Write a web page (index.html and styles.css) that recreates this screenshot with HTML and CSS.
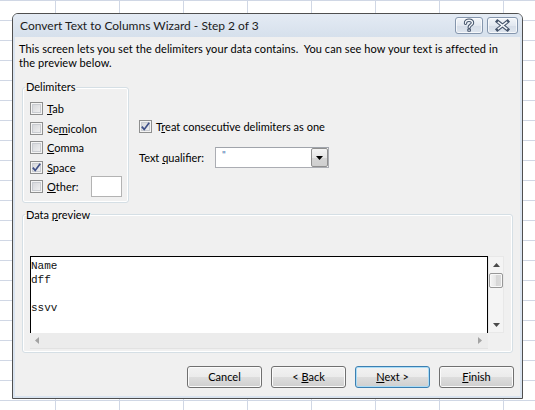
FILE: index.html
```html
<!DOCTYPE html>
<html>
<head>
<meta charset="utf-8">
<link rel="stylesheet" href="styles.css">
</head>
<body>
<div class="dialog">
  <div class="titlebar">
    <span class="title">Convert Text to Columns Wizard - Step 2 of 3</span>
    <div class="capbtns">
      <div class="cap help">
        <svg width="26" height="15" viewBox="0 0 26 15">
          <path d="M9.5 5.2 C9.5 3 11 2.2 13 2.2 C15 2.2 16.5 3 16.5 5 C16.5 6.8 13.2 7.2 13.2 9.3" fill="none" stroke="#44536a" stroke-width="3.4" stroke-linecap="round"/>
          <rect x="11.3" y="10.6" width="3.6" height="3.2" rx="0.8" fill="#44536a"/>
          <path d="M9.5 5.2 C9.5 3 11 2.2 13 2.2 C15 2.2 16.5 3 16.5 5 C16.5 6.8 13.2 7.2 13.2 9.3" fill="none" stroke="#f3f6fa" stroke-width="1.4" stroke-linecap="round"/>
          <rect x="12.4" y="11.6" width="1.4" height="1.2" fill="#f3f6fa"/>
        </svg>
      </div>
      <div class="cap close">
        <svg width="29" height="15" viewBox="0 0 29 15">
          <path d="M9.5 3.5 L19.5 11.5 M19.5 3.5 L9.5 11.5" fill="none" stroke="#44536a" stroke-width="3.6" stroke-linecap="square"/>
          <path d="M9.8 3.8 L19.2 11.2 M19.2 3.8 L9.8 11.2" fill="none" stroke="#f3f6fa" stroke-width="1.5"/>
        </svg>
      </div>
    </div>
  </div>
  <div class="client">
    <p class="intro">This screen lets you set the delimiters your data contains.&nbsp; You can see how your text is affected in<br>the preview below.</p>
    <div class="top-row">
      <fieldset class="group delims">
        <legend>Delimiters</legend>
        <div class="cb-list">
          <div class="cb-row"><span class="cb"></span><span><u>T</u>ab</span></div>
          <div class="cb-row"><span class="cb"></span><span>Se<u>m</u>icolon</span></div>
          <div class="cb-row"><span class="cb"></span><span><u>C</u>omma</span></div>
          <div class="cb-row"><span class="cb"><svg class="tick" width="11" height="11" viewBox="0 0 11 11"><path d="M1.8 5.6 L4.2 8.4 L9.2 1.8" fill="none" stroke="#3e4f87" stroke-width="1.7"/></svg></span><span><u>S</u>pace</span></div>
          <div class="cb-row"><span class="cb"></span><span><u>O</u>ther:</span><span class="other-input"></span></div>
        </div>
      </fieldset>
      <div class="options">
        <div class="cb-row treat"><span class="cb"><svg class="tick" width="11" height="11" viewBox="0 0 11 11"><path d="M1.8 5.6 L4.2 8.4 L9.2 1.8" fill="none" stroke="#3e4f87" stroke-width="1.7"/></svg></span><span>T<u>r</u>eat consecutive delimiters as one</span></div>
        <div class="qual">
          <span class="qual-label">Text <u>q</u>ualifier:</span>
          <div class="combo">
            <span class="combo-val">"</span>
            <span class="combo-btn"><svg width="7" height="4" viewBox="0 0 7 4"><path d="M0 0 H7 L3.5 4 Z" fill="#000"/></svg></span>
          </div>
        </div>
      </div>
    </div>
    <fieldset class="group preview-group">
      <legend>Data <u>p</u>review</legend>
      <div class="preview">
        <div class="pv-text">Name<br>dff<br><br>ssvv</div>
        <div class="vscroll">
          <svg class="arrow" width="7" height="4" viewBox="0 0 7 4"><path d="M3.5 0 L7 4 H0 Z" fill="#4a4a4a"/></svg>
          <div class="thumb"></div>
          <div class="vspace"></div>
          <svg class="arrow" width="7" height="4" viewBox="0 0 7 4"><path d="M0 0 H7 L3.5 4 Z" fill="#4a4a4a"/></svg>
        </div>
        <div class="hscroll">
          <svg width="4" height="7" viewBox="0 0 4 7"><path d="M4 0 V7 L0 3.5 Z" fill="#a3a3a3"/></svg>
          <svg width="4" height="7" viewBox="0 0 4 7"><path d="M0 0 V7 L4 3.5 Z" fill="#a3a3a3"/></svg>
        </div>
        <div class="corner"></div>
      </div>
    </fieldset>
    <div class="buttons">
      <div class="btn"><span>Cancel</span></div>
      <div class="btn"><span>&lt; <u>B</u>ack</span></div>
      <div class="btn default"><span><u>N</u>ext &gt;</span></div>
      <div class="btn"><span><u>F</u>inish</span></div>
    </div>
  </div>
</div>
</body>
</html>
```
FILE: styles.css
```css
html, body {
  margin: 0;
  padding: 0;
  height: 100%;
}
body {
  background-color: #ffffff;
  background-image:
    linear-gradient(to bottom, #d0d7e5 1px, transparent 1px),
    linear-gradient(to right, #d0d7e5 1px, transparent 1px);
  background-size: 100% 20px, 64px 100%;
  background-position: 0 0, 55px 0;
  font-family: "Lato", "Liberation Sans", sans-serif;
  font-size: 11px;
  color: #000;
  overflow: hidden;
}
.dialog {
  position: absolute;
  left: 12px;
  top: 13px;
  width: 511px;
  height: 386px;
  box-sizing: border-box;
  border: 1px solid #4f4f4f;
  border-radius: 6px 6px 0 0;
  background: #dae4f0;
  display: flex;
  flex-direction: column;
}
.titlebar {
  height: 23px;
  flex: none;
  display: flex;
  align-items: flex-start;
  justify-content: space-between;
  background: linear-gradient(#e4ebf4, #d6e0ec);
  border-radius: 5px 5px 0 0;
}
.title {
  padding-left: 7px;
  line-height: 23px;
  font-size: 12px;
  color: #1b1b1b;
}
.capbtns {
  display: flex;
  gap: 4px;
  margin-top: 3px;
  margin-right: 4px;
}
.cap {
  height: 17px;
  box-sizing: border-box;
  border: 1px solid #8596ad;
  border-radius: 3px;
  background: linear-gradient(#f3f6fa, #e2e8f0 50%, #d5dde8 51%, #dfe6ef);
  box-shadow: inset 0 0 0 1px rgba(255,255,255,0.7);
  display: flex;
  align-items: center;
  justify-content: center;
}
.cap.help { width: 28px; }
.cap.close { width: 31px; }
.cap svg { display: block; }
.client {
  flex: 1;
  margin: 0 2px 2px 2px;
  background: #f0f0f0;
  padding-top: 5px;
  box-sizing: border-box;
}
.intro {
  margin: 0;
  padding-left: 4px;
  line-height: 14px;
  white-space: nowrap;
  letter-spacing: 0.08px;
}
.top-row {
  display: flex;
  align-items: flex-start;
  margin-top: 10px;
  padding-left: 7px;
}
fieldset.group {
  margin: 0;
  padding: 0;
  border: 1px solid #d5dfe5;
  border-radius: 3px;
  box-shadow: inset 0 0 0 1px #ffffff;
  min-width: 0;
}
fieldset.group legend {
  padding: 0 1px;
  margin-left: 2px;
  line-height: 14px;
}
.delims {
  width: 107px;
  box-sizing: border-box;
}
.cb-list {
  padding: 5px 6px 5px 7px;
}
.cb-row {
  display: flex;
  align-items: center;
  height: 19.5px;
  gap: 4px;
}
.cb {
  flex: none;
  width: 13px;
  height: 13px;
  box-sizing: border-box;
  border: 1px solid #8e8f8f;
  background: linear-gradient(135deg, #d0d2d6, #f5f5f5);
  box-shadow: inset 0 0 0 1px #f4f4f4, inset 0 0 0 2px #c9ccd1;
  display: flex;
  align-items: center;
  justify-content: center;
}
.tick { display: block; }
.other-input {
  margin-left: auto;
  width: 31px;
  height: 21px;
  box-sizing: border-box;
  border: 1px solid #b3b3b3;
  background: #fff;
}
.options {
  margin-left: 10px;
  padding-top: 40px;
}
.cb-row.treat {
  height: 13px;
}
.qual {
  display: flex;
  align-items: center;
  margin-top: 14px;
}
.qual-label {
  width: 76px;
}
.combo {
  width: 114px;
  height: 21px;
  box-sizing: border-box;
  border: 1px solid #abadb3;
  border-top-color: #a0a4ab;
  background: #fff;
  display: flex;
  align-items: stretch;
}
.combo-val {
  flex: 1;
  padding-left: 6px;
  line-height: 13px;
  color: #2f68a8;
  font-size: 10px;
}
.combo-btn {
  width: 17px;
  box-sizing: border-box;
  border: 1px solid #8f8f8f;
  border-radius: 2px;
  background: linear-gradient(#f4f4f4, #e6e6e6 50%, #d5d5d5 51%, #cfcfcf);
  display: flex;
  align-items: center;
  justify-content: center;
}
.combo-btn svg { display: block; }
.preview-group {
  margin: 5px 0 0 7px !important;
  width: 491px;
  box-sizing: border-box;
}
.preview {
  margin: 34px 0 3px 7px;
  display: grid;
  grid-template-columns: 458px 16px;
  grid-template-rows: 77px 16px;
}
.pv-text {
  background: #fff;
  border: 1px solid #000;
  border-bottom: none;
  padding-top: 2px;
  font-family: "Liberation Mono", monospace;
  font-size: 11px;
  line-height: 14px;
  color: #111;
  overflow: hidden;
}
.vscroll {
  background: #f4f4f4;
  border: 1px solid #e8e8e8;
  box-sizing: border-box;
  display: flex;
  flex-direction: column;
  align-items: center;
  padding: 6px 0 5px;
}
.vscroll .arrow { display: block; flex: none; }
.thumb {
  margin-top: 6px;
  width: 14px;
  height: 15px;
  box-sizing: border-box;
  border: 1px solid #979797;
  border-radius: 2px;
  background: linear-gradient(to right, #f5f5f5, #e5e5e5 50%, #d6d6d6 51%, #dcdcdc);
  box-shadow: inset 0 0 0 1px #f8f8f8;
  flex: none;
}
.vspace { flex: 1; }
.hscroll {
  background: #ececec;
  border-bottom: 1px solid #e2e2e2;
  box-sizing: border-box;
  display: flex;
  align-items: center;
  justify-content: space-between;
  padding: 0 6px 0 5px;
}
.hscroll svg { display: block; }
.corner { background: #f0f0f0; }
.buttons {
  display: flex;
  justify-content: flex-end;
  gap: 9px;
  margin-top: 13px;
  padding-right: 6px;
}
.btn {
  width: 75px;
  height: 22px;
  box-sizing: border-box;
  border: 1px solid #707070;
  border-radius: 3px;
  background: linear-gradient(#f2f2f2, #ebebeb 50%, #dddddd 51%, #cfcfcf);
  box-shadow: inset 0 0 0 1px #fbfbfb;
  display: flex;
  align-items: center;
  justify-content: center;
  line-height: 14px;
  white-space: pre;
}
.btn.default {
  border-color: #3c7fb1;
  box-shadow: inset 0 0 0 1px #a9dcf7;
}
```
